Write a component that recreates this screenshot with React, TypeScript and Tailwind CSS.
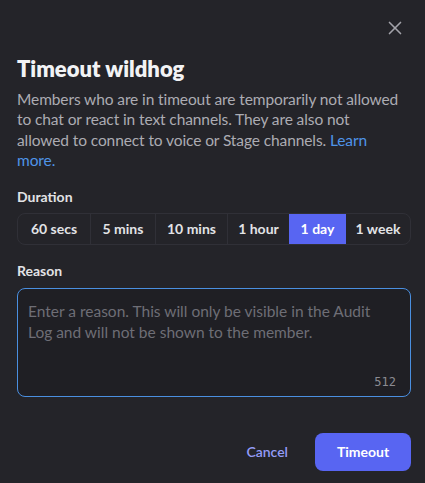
import { X } from 'lucide-react'

const durations = [
  { label: '60 secs', w: 'w-[72px]' },
  { label: '5 mins', w: 'w-[65px]' },
  { label: '10 mins', w: 'w-[72px]' },
  { label: '1 hour', w: 'w-[62px]' },
  { label: '1 day', w: 'w-[57px]' },
  { label: '1 week', w: 'flex-1' },
]

export default function App() {
  const selected = '1 day'

  return (
    <div
      className="w-[425px] h-[483px] bg-[#242429] text-[#dfe0e2] relative overflow-hidden"
      style={{ fontFamily: 'Lato, "Noto Sans", sans-serif' }}
    >
      {/* Close */}
      <button className="absolute right-[19px] top-[17px] text-[#a3a3aa]">
        <X size={22} strokeWidth={1.8} />
      </button>

      <div className="pl-[17px] pr-[14px] pt-[54px]">
        <h1 className="text-[22px] leading-[30px] font-extrabold text-[#f2f3f5]">Timeout wildhog</h1>
        <p className="mt-[5px] text-[15.5px] leading-[20.4px] tracking-[-0.1px] text-[#acacb3] whitespace-nowrap">
          Members who are in timeout are temporarily not allowed
          <br />
          to chat or react in text channels. They are also not
          <br />
          allowed to connect to voice or Stage channels.{' '}
          <span className="text-[#4f94e8]">
            Learn
            <br />
            more.
          </span>
        </p>

        <div className="mt-[17px] text-[14px] leading-[18px] font-bold text-[#e2e3e6]">Duration</div>
        <div className="mt-[7px] flex h-[32px] rounded-[8px] border border-[#303037] overflow-hidden">
          {durations.map((d, i) => (
            <div
              key={d.label}
              className={
                d.w +
                ' shrink-0 flex items-center justify-center text-[14px] font-bold ' +
                (d.label === selected ? 'bg-[#5865f2] text-white' : 'text-[#e2e3e6]') +
                (i > 0 && d.label !== selected && durations[i - 1].label !== selected
                  ? ' border-l border-[#303037]'
                  : '')
              }
            >
              {d.label}
            </div>
          ))}
        </div>

        <div className="mt-[17px] text-[14px] leading-[18px] font-bold text-[#e2e3e6]">Reason</div>
        <div className="mt-[8px] h-[109px] rounded-[8px] border border-[#4a8fe0] bg-[#1f1f24] relative px-[10px] pt-[12px]">
          <p className="text-[15.5px] leading-[21px] text-[#6e6e76] whitespace-nowrap">
            Enter a reason. This will only be visible in the Audit
            <br />
            Log and will not be shown to the member.
          </p>
          <span
            className="absolute right-[14px] bottom-[5px] text-[12px] text-[#8b8b92]"
            style={{ fontFamily: '"DejaVu Sans Mono", monospace' }}
          >
            512
          </span>
        </div>

        <div className="mt-[36px] flex items-center justify-end gap-[27px]">
          <button className="text-[14px] font-semibold text-[#949cf7]">Cancel</button>
          <button className="h-[38px] w-[96px] rounded-[8px] bg-[#5865f2] text-[14px] font-bold text-white">
            Timeout
          </button>
        </div>
      </div>
    </div>
  )
}
